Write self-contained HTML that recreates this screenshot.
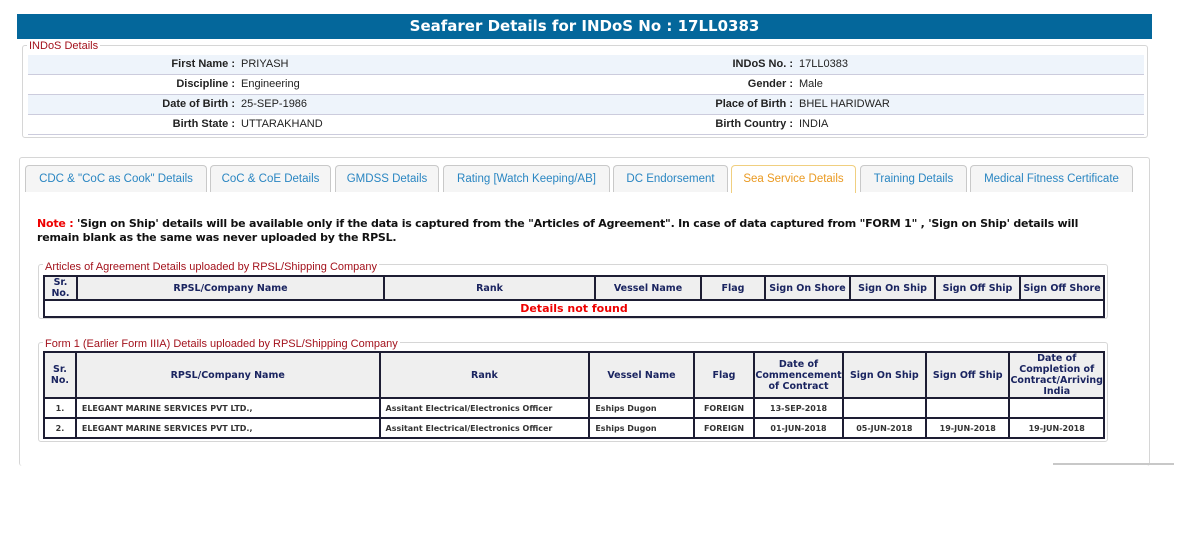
<!DOCTYPE html>
<html><head><meta charset="utf-8"><style>
*{box-sizing:border-box;margin:0;padding:0}
body{width:1181px;height:550px;background:#fff;position:relative;font-family:"Liberation Sans",Arial,sans-serif;overflow:hidden}
.a{position:absolute}
.hdr{left:17px;top:14px;width:1135px;height:25px;background:#04679b;color:#fff;font:bold 15px "DejaVu Sans",sans-serif;text-align:center;line-height:25px}
.fs{border:1px solid #d6d6d6;border-radius:3px}
.lg{background:#fff;color:#a3121c;font-size:11px;padding:0 2px;line-height:12px}
.row{left:28px;width:1116px;height:20px;border-bottom:1px solid #ccd;font-size:11px;line-height:19px;color:#222}
.row.o{background:#eef4fb}
.row span{position:absolute}
.l1{right:909px;text-align:right;font-weight:bold}
.v1{left:213px}
.l2{right:351px;font-weight:bold}
.v2{left:771px}
.tab{top:165px;height:27px;border:1px solid #c9c9c9;border-bottom:none;border-radius:4px 4px 0 0;background:#f5f5f5;color:#2a86c2;font-size:11.5px;text-align:center;line-height:26px}
.tab.act{background:#fff;color:#ea9a22;border-color:#f0cf80;height:28px}
table{position:absolute;border-collapse:collapse;font-family:"DejaVu Sans",Verdana,sans-serif}
td,th{border:2px solid #1d1d33;font-size:9.5px;text-align:center;color:#1a2460;padding:0}
th{background:#efefef;font-weight:bold}
td{font-size:8px;font-weight:bold;color:#333;text-align:center}
td.l{text-align:left;padding-left:5px}
</style></head><body>
<div class="a hdr">Seafarer Details for INDoS No : 17LL0383</div>
<div class="a fs" style="left:22px;top:45px;width:1126px;height:93px"></div>
<div class="a lg" style="left:27px;top:40px">INDoS Details</div>
<div class="a row o" style="top:55px"><span class="l1">First Name :</span><span class="v1">PRIYASH</span><span class="l2">INDoS No. :</span><span class="v2">17LL0383</span></div>
<div class="a row" style="top:75px"><span class="l1">Discipline :</span><span class="v1">Engineering</span><span class="l2">Gender :</span><span class="v2">Male</span></div>
<div class="a row o" style="top:95px"><span class="l1">Date of Birth :</span><span class="v1">25-SEP-1986</span><span class="l2">Place of Birth :</span><span class="v2">BHEL HARIDWAR</span></div>
<div class="a row" style="top:115px"><span class="l1">Birth State :</span><span class="v1">UTTARAKHAND</span><span class="l2">Birth Country :</span><span class="v2">INDIA</span></div>

<div class="a fs" style="left:19px;top:157px;width:1131px;height:309px;border-bottom:none"></div>
<div class="a tab" style="left:25px;width:182px">CDC &amp; "CoC as Cook" Details</div>
<div class="a tab" style="left:210px;width:121px">CoC &amp; CoE Details</div>
<div class="a tab" style="left:335px;width:104px">GMDSS Details</div>
<div class="a tab" style="left:443px;width:167px">Rating [Watch Keeping/AB]</div>
<div class="a tab" style="left:613px;width:115px">DC Endorsement</div>
<div class="a tab act" style="left:731px;width:125px">Sea Service Details</div>
<div class="a tab" style="left:860px;width:107px">Training Details</div>
<div class="a tab" style="left:970px;width:163px">Medical Fitness Certificate</div>

<div class="a" style="left:37px;top:217px;width:1080px;font:bold 11px 'DejaVu Sans',Verdana,sans-serif;line-height:13.5px;color:#111;letter-spacing:-0.22px;white-space:nowrap"><span style="color:#e00">Note :</span> 'Sign on Ship' details will be available only if the data is captured from the "Articles of Agreement". In case of data captured from "FORM 1" , 'Sign on Ship' details will<br>remain blank as the same was never uploaded by the RPSL.</div>

<div class="a fs" style="left:38px;top:264px;width:1070px;height:55px"></div>
<div class="a lg" style="left:43px;top:261px;font-size:11px">Articles of Agreement Details uploaded by RPSL/Shipping Company</div>
<table style="left:43px;top:275px;width:1062px">
<tr style="height:24px"><th style="width:33px">Sr.<br>No.</th><th style="width:307px">RPSL/Company Name</th><th style="width:211px">Rank</th><th style="width:106px">Vessel Name</th><th style="width:64px">Flag</th><th style="width:85px">Sign On Shore</th><th style="width:85px">Sign On Ship</th><th style="width:85px">Sign Off Ship</th><th>Sign Off Shore</th></tr>
<tr style="height:17px"><td colspan="9" style="color:#e00;font-size:11px;border-top:2px solid #1d1d33">Details not found</td></tr>
</table>

<div class="a fs" style="left:38px;top:342px;width:1070px;height:100px"></div>
<div class="a lg" style="left:43px;top:338px;font-size:11px">Form 1 (Earlier Form IIIA) Details uploaded by RPSL/Shipping Company</div>
<table style="left:43px;top:351px;width:1062px">
<tr style="height:46px"><th style="width:32px">Sr.<br>No.</th><th style="width:306px">RPSL/Company Name</th><th style="width:211px">Rank</th><th style="width:105px">Vessel Name</th><th style="width:61px">Flag</th><th style="width:85px">Date of<br>Commencement<br>of Contract</th><th style="width:84px">Sign On Ship</th><th style="width:84px">Sign Off Ship</th><th>Date of<br>Completion of<br>Contract/Arriving<br>India</th></tr>
<tr style="height:20px"><td>1.</td><td class="l">ELEGANT MARINE SERVICES PVT LTD.,</td><td class="l">Assitant Electrical/Electronics Officer</td><td class="l">Eships Dugon</td><td>FOREIGN</td><td>13-SEP-2018</td><td></td><td></td><td></td></tr>
<tr style="height:20px"><td>2.</td><td class="l">ELEGANT MARINE SERVICES PVT LTD.,</td><td class="l">Assitant Electrical/Electronics Officer</td><td class="l">Eships Dugon</td><td>FOREIGN</td><td>01-JUN-2018</td><td>05-JUN-2018</td><td>19-JUN-2018</td><td>19-JUN-2018</td></tr>
</table>
<div class="a" style="left:1053px;top:463px;width:121px;height:2px;background:#c8c8c8"></div>
</body></html>
